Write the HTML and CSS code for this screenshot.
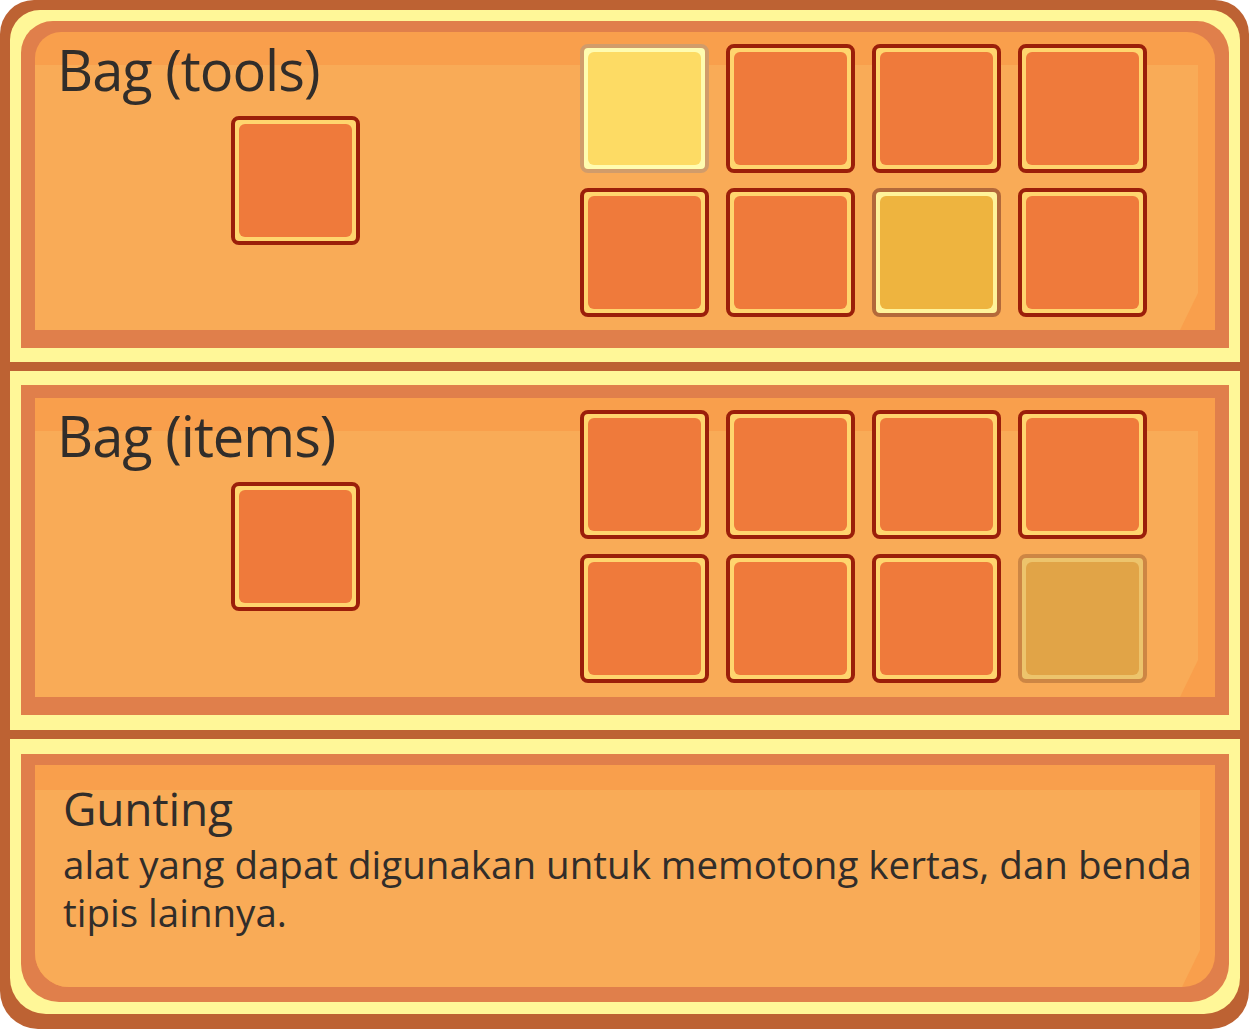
FILE: index.html
```html
<!DOCTYPE html>
<html lang="id">
<head>
<meta charset="utf-8">
<title>Bag</title>
<link rel="stylesheet" href="styles.css">
</head>
<body>
<div class="frame">
  <section class="panel panel--top">
    <div class="rim">
      <div class="well well--bag">
        <div class="bag-side">
          <h2 class="bag-title">Bag (tools)</h2>
          <div class="slot"><span class="slot-fill"></span></div>
        </div>
        <div class="slot-grid">
          <div class="slot slot--selected"><span class="slot-fill"></span></div>
          <div class="slot"><span class="slot-fill"></span></div>
          <div class="slot"><span class="slot-fill"></span></div>
          <div class="slot"><span class="slot-fill"></span></div>
          <div class="slot"><span class="slot-fill"></span></div>
          <div class="slot"><span class="slot-fill"></span></div>
          <div class="slot slot--hover"><span class="slot-fill"></span></div>
          <div class="slot"><span class="slot-fill"></span></div>
        </div>
      </div>
    </div>
  </section>
  <section class="panel panel--mid">
    <div class="rim">
      <div class="well well--bag">
        <div class="bag-side">
          <h2 class="bag-title">Bag (items)</h2>
          <div class="slot"><span class="slot-fill"></span></div>
        </div>
        <div class="slot-grid">
          <div class="slot"><span class="slot-fill"></span></div>
          <div class="slot"><span class="slot-fill"></span></div>
          <div class="slot"><span class="slot-fill"></span></div>
          <div class="slot"><span class="slot-fill"></span></div>
          <div class="slot"><span class="slot-fill"></span></div>
          <div class="slot"><span class="slot-fill"></span></div>
          <div class="slot"><span class="slot-fill"></span></div>
          <div class="slot slot--disabled"><span class="slot-fill"></span></div>
        </div>
      </div>
    </div>
  </section>
  <section class="panel panel--bottom">
    <div class="rim">
      <div class="well well--info">
        <div class="info">
          <h3 class="info-title">Gunting</h3>
          <p class="info-text">alat yang dapat digunakan untuk memotong kertas, dan benda tipis lainnya.</p>
        </div>
      </div>
    </div>
  </section>
</div>
</body>
</html>
```

FILE: styles.css
```css
* { box-sizing: border-box; }

html, body {
  margin: 0;
  padding: 0;
  background: #ffffff;
}

body {
  font-family: "Open Sans", "Noto Sans", "Liberation Sans", sans-serif;
  color: #312d2a;
}

.frame {
  width: 1249px;
  height: 1029px;
  background: #bd6233;
  border-radius: 34px 34px 38px 38px;
  padding: 10px 9px 15px 10px;
  display: flex;
  flex-direction: column;
  gap: 9px;
}

.panel {
  background: #fff798;
  display: flex;
  padding-left: 11px;
  padding-right: 11px;
}

.panel--top {
  height: 352px;
  padding-top: 11px;
  padding-bottom: 14px;
  border-radius: 30px 30px 0 0;
}

.panel--mid {
  height: 359px;
  padding-top: 14px;
  padding-bottom: 15px;
}

.panel--bottom {
  height: 275px;
  padding-top: 15px;
  padding-bottom: 12px;
  border-radius: 0 0 36px 36px;
}

.rim {
  flex: 1;
  min-width: 0;
  display: flex;
  background: #e07f4b;
  padding: 11px 14px 18px;
}

.panel--top .rim { border-radius: 32px 32px 0 0; }
.panel--mid .rim { padding-top: 13px; }
.panel--bottom .rim {
  padding-bottom: 15px;
  border-radius: 0 0 38px 38px;
}

.well {
  flex: 1;
  min-width: 0;
  position: relative;
  overflow: hidden;
  background: #f99f4c;
}

.well::before {
  content: "";
  position: absolute;
  top: 33px;
  left: 0;
  right: 17px;
  bottom: 0;
  background: #f9ab57;
  clip-path: polygon(0 0, 100% 0, 100% calc(100% - 37px), calc(100% - 18px) 100%, 0 100%);
}

.well--info::before {
  top: 25px;
  right: 15px;
}

.panel--top .well { border-radius: 26px 28px 0 0; }
.panel--bottom .well { border-radius: 0 0 32px 34px; }

.well > * {
  position: relative;
}

.well--bag {
  display: grid;
  grid-template-columns: 545px auto;
  align-items: start;
}

.bag-side {
  padding-left: 22px;
}

.bag-title {
  margin: 9px 0 0;
  font-size: 56px;
  line-height: 56px;
  font-weight: 400;
  letter-spacing: -1px;
  white-space: nowrap;
}

.bag-side .slot {
  margin: 19px 0 0 174px;
}

.slot-grid {
  margin-top: 12px;
  display: grid;
  grid-template-columns: repeat(4, 129px);
  grid-auto-rows: 129px;
  column-gap: 17px;
  row-gap: 15px;
}

.slot {
  width: 129px;
  height: 129px;
  border: 4px solid #9b1f0a;
  border-radius: 8px;
  background: #ffd56e;
  padding: 4px;
}

.slot-fill {
  display: block;
  height: 100%;
  border-radius: 6px;
  background: #ef7a3b;
}

.slot--selected {
  border-color: #d19c6a;
  background: #fffcb0;
}
.slot--selected .slot-fill { background: #fddb64; }

.slot--hover {
  border-color: #b3693a;
  background: #fff39b;
}
.slot--hover .slot-fill { background: #eeb43f; }

.slot--disabled {
  border-color: #cd8644;
  background: #edc46c;
}
.slot--disabled .slot-fill { background: #e1a447; }

.info {
  padding: 20px 0 0 28px;
}

.info-title {
  margin: 0;
  font-size: 46px;
  line-height: 46px;
  font-weight: 400;
  letter-spacing: -0.2px;
}

.info-text {
  margin: 9px 0 0;
  font-size: 38.5px;
  line-height: 48px;
}
```
